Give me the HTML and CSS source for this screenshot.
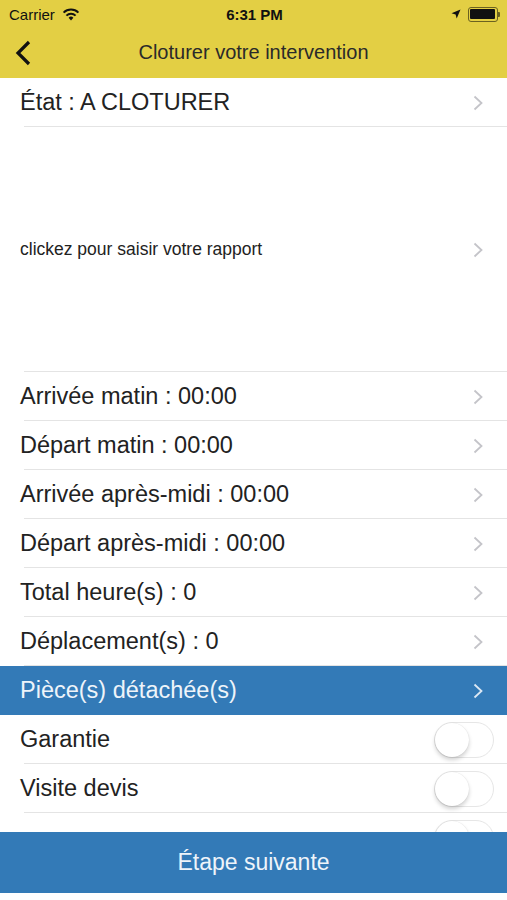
FILE: index.html
```html
<!DOCTYPE html>
<html lang="fr">
<head>
    <meta charset="UTF-8">
    <meta name="viewport" content="width=device-width, initial-scale=1.0">
    <title>Cloturer votre intervention</title>
    <link rel="stylesheet" href="styles.css">
</head>

<body>
    <div class="statusbar">
        <div class="status-left">
            <span>Carrier</span>
            <svg class="wifi" width="18" height="13" viewBox="0 0 18 13">
                <path d="M9 12.5 L6.6 9.8 A3.4 3.4 0 0 1 11.4 9.8 Z" fill="#111"/>
                <path d="M4.4 7.6 A6.6 6.6 0 0 1 13.6 7.6" stroke="#111" stroke-width="2" fill="none"/>
                <path d="M1.6 4.6 A10.6 10.6 0 0 1 16.4 4.6" stroke="#111" stroke-width="2" fill="none"/>
            </svg>
        </div>
        <div class="status-time">6:31 PM</div>
        <div class="status-right">
            <svg width="10" height="10" viewBox="0 0 10 10">
                <path d="M9.5 0.5 L0.5 4.3 L4.6 5.4 L5.7 9.5 Z" fill="#111"/>
            </svg>
            <div class="battery"><div class="battery-level"></div></div>
            <div class="battery-nub"></div>
        </div>
    </div>

    <div class="navbar">
        <svg class="back" width="18" height="26" viewBox="0 0 18 26">
            <polyline points="14,2 3,13 14,24" stroke="#111" stroke-width="3.2" fill="none"/>
        </svg>
        <div class="nav-title">Cloturer votre intervention</div>
    </div>

    <div class="list">
        <div class="row">
            <span>État : A CLOTURER</span>
            <svg class="chevron" width="10" height="16" viewBox="0 0 10 16"><polyline points="1.5,1.5 8.5,8 1.5,14.5"/></svg>
        </div>
        <div class="row row-report">
            <span class="small">clickez pour saisir votre rapport</span>
            <svg class="chevron" width="10" height="16" viewBox="0 0 10 16"><polyline points="1.5,1.5 8.5,8 1.5,14.5"/></svg>
        </div>
        <div class="row">
            <span>Arrivée matin : 00:00</span>
            <svg class="chevron" width="10" height="16" viewBox="0 0 10 16"><polyline points="1.5,1.5 8.5,8 1.5,14.5"/></svg>
        </div>
        <div class="row">
            <span>Départ matin : 00:00</span>
            <svg class="chevron" width="10" height="16" viewBox="0 0 10 16"><polyline points="1.5,1.5 8.5,8 1.5,14.5"/></svg>
        </div>
        <div class="row">
            <span>Arrivée après-midi : 00:00</span>
            <svg class="chevron" width="10" height="16" viewBox="0 0 10 16"><polyline points="1.5,1.5 8.5,8 1.5,14.5"/></svg>
        </div>
        <div class="row">
            <span>Départ après-midi : 00:00</span>
            <svg class="chevron" width="10" height="16" viewBox="0 0 10 16"><polyline points="1.5,1.5 8.5,8 1.5,14.5"/></svg>
        </div>
        <div class="row">
            <span>Total heure(s) : 0</span>
            <svg class="chevron" width="10" height="16" viewBox="0 0 10 16"><polyline points="1.5,1.5 8.5,8 1.5,14.5"/></svg>
        </div>
        <div class="row">
            <span>Déplacement(s) : 0</span>
            <svg class="chevron" width="10" height="16" viewBox="0 0 10 16"><polyline points="1.5,1.5 8.5,8 1.5,14.5"/></svg>
        </div>
        <div class="row row-active">
            <span>Pièce(s) détachée(s)</span>
            <svg class="chevron" width="10" height="16" viewBox="0 0 10 16"><polyline points="1.5,1.5 8.5,8 1.5,14.5"/></svg>
        </div>
        <div class="row row-switch">
            <span>Garantie</span>
            <div class="toggle"><div class="knob"></div></div>
        </div>
        <div class="row row-switch">
            <span>Visite devis</span>
            <div class="toggle"><div class="knob"></div></div>
        </div>
        <div class="row row-switch">
            <span></span>
            <div class="toggle"><div class="knob"></div></div>
        </div>
    </div>

    <button class="next">Étape suivante</button>
</body>

</html>
```

FILE: styles.css
```css
body {
    margin: 0;
    width: 507px;
    height: 900px;
    background: #fff;
    font-family: 'Liberation Sans', Arial, sans-serif;
    color: #222;
    overflow: hidden;
}

.statusbar {
    height: 28px;
    background: #e3cf44;
    display: flex;
    align-items: center;
    justify-content: space-between;
    padding: 0 7px 0 9px;
    font-size: 15px;
    color: #111;
}

.status-left {
    display: flex;
    align-items: center;
    gap: 7px;
    width: 120px;
}

.status-time {
    font-weight: bold;
    font-size: 15px;
}

.status-right {
    display: flex;
    align-items: center;
    justify-content: flex-end;
    width: 120px;
}

.status-right svg {
    margin-right: 7px;
}

.battery {
    width: 25px;
    height: 10px;
    border: 1.5px solid #6b6220;
    border-radius: 3px;
    padding: 1.5px;
}

.battery-level {
    width: 100%;
    height: 100%;
    background: #111;
    border-radius: 1px;
}

.battery-nub {
    width: 2px;
    height: 5px;
    background: #6b6220;
    border-radius: 0 1px 1px 0;
}

.navbar {
    height: 50px;
    background: #e3cf44;
    display: flex;
    align-items: center;
    padding-left: 15px;
}

.back {
    margin-top: -1px;
}

.nav-title {
    flex: 1;
    text-align: center;
    font-size: 20px;
    color: #2a2a2a;
    margin-right: 33px;
    margin-top: -2px;
}

.list {
    height: 754px;
    overflow: hidden;
}

.row {
    height: 49px;
    display: flex;
    align-items: center;
    justify-content: space-between;
    padding: 0 24px 0 20px;
    font-size: 23.5px;
    background: linear-gradient(#e4e4e4, #e4e4e4) no-repeat left 24px bottom / 100% 1px;
}

.row-report {
    height: 245px;
}

.small {
    font-size: 17.5px;
}

.chevron polyline {
    fill: none;
    stroke: #c4c4c9;
    stroke-width: 1.8;
}

.row-active {
    background: #337ab7;
    color: #eef4fa;
}

.row-active .chevron polyline {
    stroke: #dce8f4;
}

.row-switch {
    padding-right: 13px;
}

.toggle {
    width: 58px;
    height: 34px;
    border: 1.5px solid #e6e6e6;
    border-radius: 19px;
    display: flex;
    align-items: center;
}

.knob {
    width: 34px;
    height: 34px;
    border-radius: 50%;
    background: #fff;
    box-shadow: 0 3px 4px rgba(0, 0, 0, 0.18), 0 0 1px rgba(0, 0, 0, 0.15);
}

.next {
    display: block;
    width: 100%;
    height: 61px;
    border: none;
    background: #337ab7;
    color: #eef4fa;
    font-family: 'Liberation Sans', Arial, sans-serif;
    font-size: 23px;
    padding: 0;
}
```
